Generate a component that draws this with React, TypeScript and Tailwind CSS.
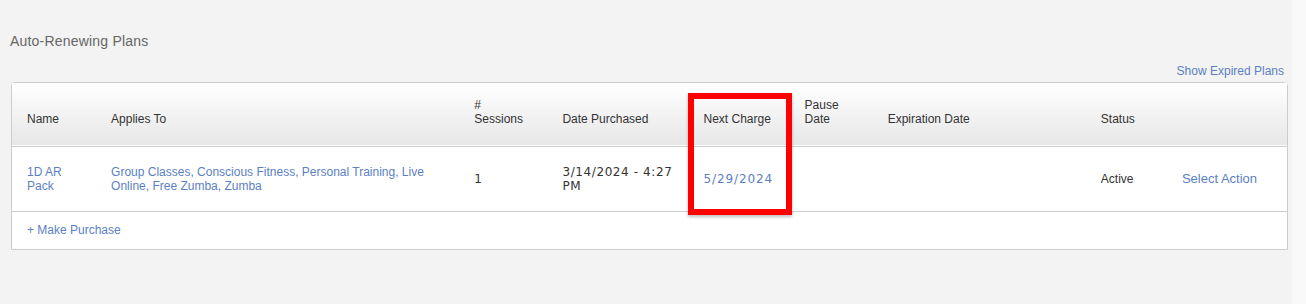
import React from 'react';

const font = { fontFamily: '"Liberation Sans", Arial, sans-serif' };
const numFont = { fontFamily: '"DejaVu Sans", Verdana, sans-serif' };

type Col = { label: React.ReactNode; width: string; pad: string };

const cols: Col[] = [
  { label: 'Name', width: 'w-[84px]', pad: 'pl-[15px]' },
  { label: 'Applies To', width: 'w-[363px]', pad: 'pl-[15px] pr-[30px]' },
  { label: <>#<br />Sessions</>, width: 'w-[88px]', pad: 'pl-[15px]' },
  { label: 'Date Purchased', width: 'w-[141px]', pad: 'pl-[15px]' },
  { label: 'Next Charge', width: 'w-[101px]', pad: 'pl-[15px]' },
  { label: <>Pause<br />Date</>, width: 'w-[83px]', pad: 'pl-[15px]' },
  { label: 'Expiration Date', width: 'w-[213px]', pad: 'pl-[15px]' },
  { label: 'Status', width: 'w-[81px]', pad: 'pl-[15px]' },
  { label: '', width: 'w-[120px]', pad: 'pl-[15px]' },
];

export default function App() {
  return (
    <div className="flex w-[1306px] h-[304px] bg-[#f3f3f3]" style={font}>
      <div className="flex-1 pl-[11px] pr-[4px]">
        {/* Title */}
        <div className="pt-[31px] h-[64px]">
          <h2 className="-ml-[1px] text-[14px] tracking-[0.2px] leading-[20px] font-normal text-[#666]">
            Auto-Renewing Plans
          </h2>
        </div>

        <div className="flex justify-end h-[18px] pr-[4px]">
          <a className="text-[12px] leading-[14px] text-[#5b7fc4] cursor-pointer">Show Expired Plans</a>
        </div>

        {/* Plans table */}
        <div className="relative border border-[#cccccc] rounded-t-[4px] bg-white">
          <table className="w-full table-fixed border-collapse text-[12px] leading-[14px]">
            <thead>
              <tr className="h-[63px] bg-gradient-to-b from-white to-[#e7e7e7] border-b border-[#cccccc]">
                {cols.map((c, i) => (
                  <th
                    key={i}
                    className={`${c.width} ${c.pad} align-bottom pb-[20px] text-left font-normal text-[#333]`}
                  >
                    {c.label}
                  </th>
                ))}
              </tr>
            </thead>
            <tbody>
              <tr className="h-[65px] border-b border-[#cccccc]">
                <td className="pl-[15px] align-middle text-[#5b7fc4]">1D AR<br />Pack</td>
                <td className="pl-[15px] pr-[30px] align-middle text-[#5b7fc4]">
                  Group Classes, Conscious Fitness, Personal Training, Live Online, Free Zumba, Zumba
                </td>
                <td className="pl-[15px] align-middle text-[#333] tracking-[1px]" style={numFont}>1</td>
                <td className="pl-[15px] pr-[10px] align-middle text-[#333] tracking-[0.6px]" style={numFont}>
                  3/14/2024 - 4:27 PM
                </td>
                <td className="pl-[15px] align-middle text-[#5b7fc4] tracking-[0.9px]" style={numFont}>5/29/2024</td>
                <td className="pl-[15px]"></td>
                <td className="pl-[15px]"></td>
                <td className="pl-[15px] align-middle text-[#333]">Active</td>
                <td className="pl-[15px] align-middle text-[13px] text-[#5b7fc4]">Select Action</td>
              </tr>
              <tr className="h-[38px]">
                <td colSpan={9} className="pl-[15px] align-middle text-[#5b7fc4]">+ Make Purchase</td>
              </tr>
            </tbody>
          </table>

          {/* Highlight overlay */}
          <div className="absolute left-[676px] top-[10px] w-[104px] h-[122px] border-[6px] border-[#ff0000] shadow-[0_2px_3px_rgba(0,0,0,0.25)] pointer-events-none" />
        </div>
      </div>
      <div className="w-[14px] bg-[#f9f9f9]" />
    </div>
  );
}
